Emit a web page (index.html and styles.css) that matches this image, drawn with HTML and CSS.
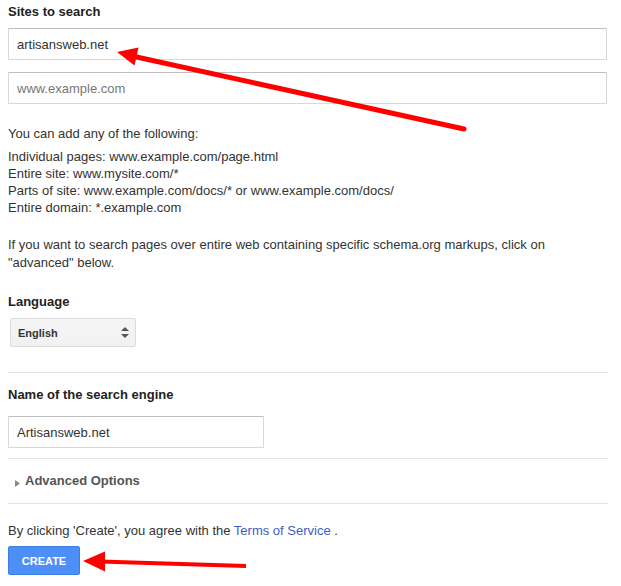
FILE: index.html
```html
<!DOCTYPE html>
<html lang="en">
<head>
<meta charset="UTF-8">
<meta name="viewport" content="width=device-width, initial-scale=1.0">
<title>New search engine</title>
<link rel="stylesheet" href="styles.css">
</head>
<body>

<div class="form">

<h3 class="label">Sites to search</h3>
<input class="field wide" type="text" value="artisansweb.net">
<input class="field wide second" type="text" placeholder="www.example.com">

<p class="hint">You can add any of the following:</p>
<div class="examples">
Individual pages: www.example.com/page.html<br>
Entire site: www.mysite.com/*<br>
Parts of site: www.example.com/docs/* or www.example.com/docs/<br>
Entire domain: *.example.com
</div>
<p class="note">If you want to search pages over entire web containing specific schema.org markups, click on "advanced" below.</p>

<h3 class="label lang">Language</h3>
<div class="select">
<span>English</span>
<svg width="8" height="12" viewBox="0 0 8 12"><path d="M4 0 L8 4 H0 Z M0 7 H8 L4 11 Z" fill="#555"/></svg>
</div>

<hr>

<h3 class="label name">Name of the search engine</h3>
<input class="field short" type="text" value="Artisansweb.net">

<hr class="after-name">

<div class="advanced">
<svg width="5" height="7" viewBox="0 0 5 7"><path d="M0 0 L5 3.5 L0 7 Z" fill="#888"/></svg>
<span>Advanced Options</span>
</div>

<hr class="after-adv">

<p class="terms">By clicking 'Create', you agree with the <a href="#">Terms of Service</a> .</p>
<button class="create">CREATE</button>

</div>

<!-- red pointers drawn over the form -->
<svg class="pointers" width="621" height="586" viewBox="0 0 621 586">
<line x1="464" y1="129" x2="132" y2="56" stroke="#f00" stroke-width="5" stroke-linecap="round"/>
<polygon points="117,52 138.5,47.5 134.5,65.5" fill="#f00"/>
<line x1="246" y1="566" x2="100" y2="561.5" stroke="#f00" stroke-width="4"/>
<polygon points="83,561 105,551.5 105,571.5" fill="#f00"/>
</svg>

</body>
</html>
```

FILE: styles.css
```css
body {
    margin: 0;
    font-family: "Liberation Sans", Arial, sans-serif;
    font-size: 13px;
    color: #333;
    background: #fff;
}

.form {
    padding: 3px 8px 0 8px;
}

.label {
    margin: 0;
    font-size: 13px;
    line-height: 17px;
    font-weight: bold;
    color: #222;
}

.field {
    display: block;
    box-sizing: border-box;
    height: 32px;
    padding: 0 8px;
    border: 1px solid #d9d9d9;
    border-top-color: #c0c0c0;
    border-radius: 1px;
    font-family: "Liberation Sans", Arial, sans-serif;
    font-size: 13px;
    color: #333;
    outline: none;
}

.field::placeholder {
    color: #777;
}

.wide {
    width: 599px;
    margin-top: 8px;
}

.second {
    margin-top: 12px;
}

.short {
    width: 256px;
    margin-top: 13px;
}

.hint {
    margin: 21px 0 0 0;
    line-height: 17px;
}

.examples {
    margin-top: 6px;
    line-height: 17px;
}

.note {
    margin: 20px 0 0 0;
    line-height: 18px;
}

.lang {
    margin-top: 21px;
}

.select {
    box-sizing: border-box;
    width: 126px;
    height: 29px;
    margin: 8px 0 0 2px;
    padding: 0 6px 0 7px;
    display: flex;
    align-items: center;
    justify-content: space-between;
    border: 1px solid #dcdcdc;
    border-radius: 2px;
    background: linear-gradient(#f5f5f5, #f1f1f1);
    font-size: 11px;
    font-weight: bold;
    color: #333;
}

hr {
    width: 600px;
    margin: 25px 0 0 0;
    border: none;
    border-top: 1px solid #e5e5e5;
}

.name {
    margin-top: 13px;
}

hr.after-name {
    margin-top: 10px;
}

.advanced {
    margin-top: 13px;
    display: flex;
    align-items: center;
    gap: 5px;
    padding-left: 7px;
    line-height: 17px;
    font-weight: bold;
    color: #555;
}

.advanced svg {
    margin-top: 5px;
}

hr.after-adv {
    margin-top: 14px;
}

.terms {
    margin: 18px 0 0 0;
    line-height: 17px;
}

.terms a {
    color: #3a5fc4;
    text-decoration: none;
}

.create {
    display: block;
    margin-top: 7px;
    width: 72px;
    height: 29px;
    border: 1px solid #3b7ee6;
    border-radius: 2px;
    background: #4d8ff7;
    color: #fff;
    font-family: "Liberation Sans", Arial, sans-serif;
    font-size: 11px;
    font-weight: bold;
    padding: 0;
}

.pointers {
    position: absolute;
    left: 0;
    top: 0;
    pointer-events: none;
}
```
